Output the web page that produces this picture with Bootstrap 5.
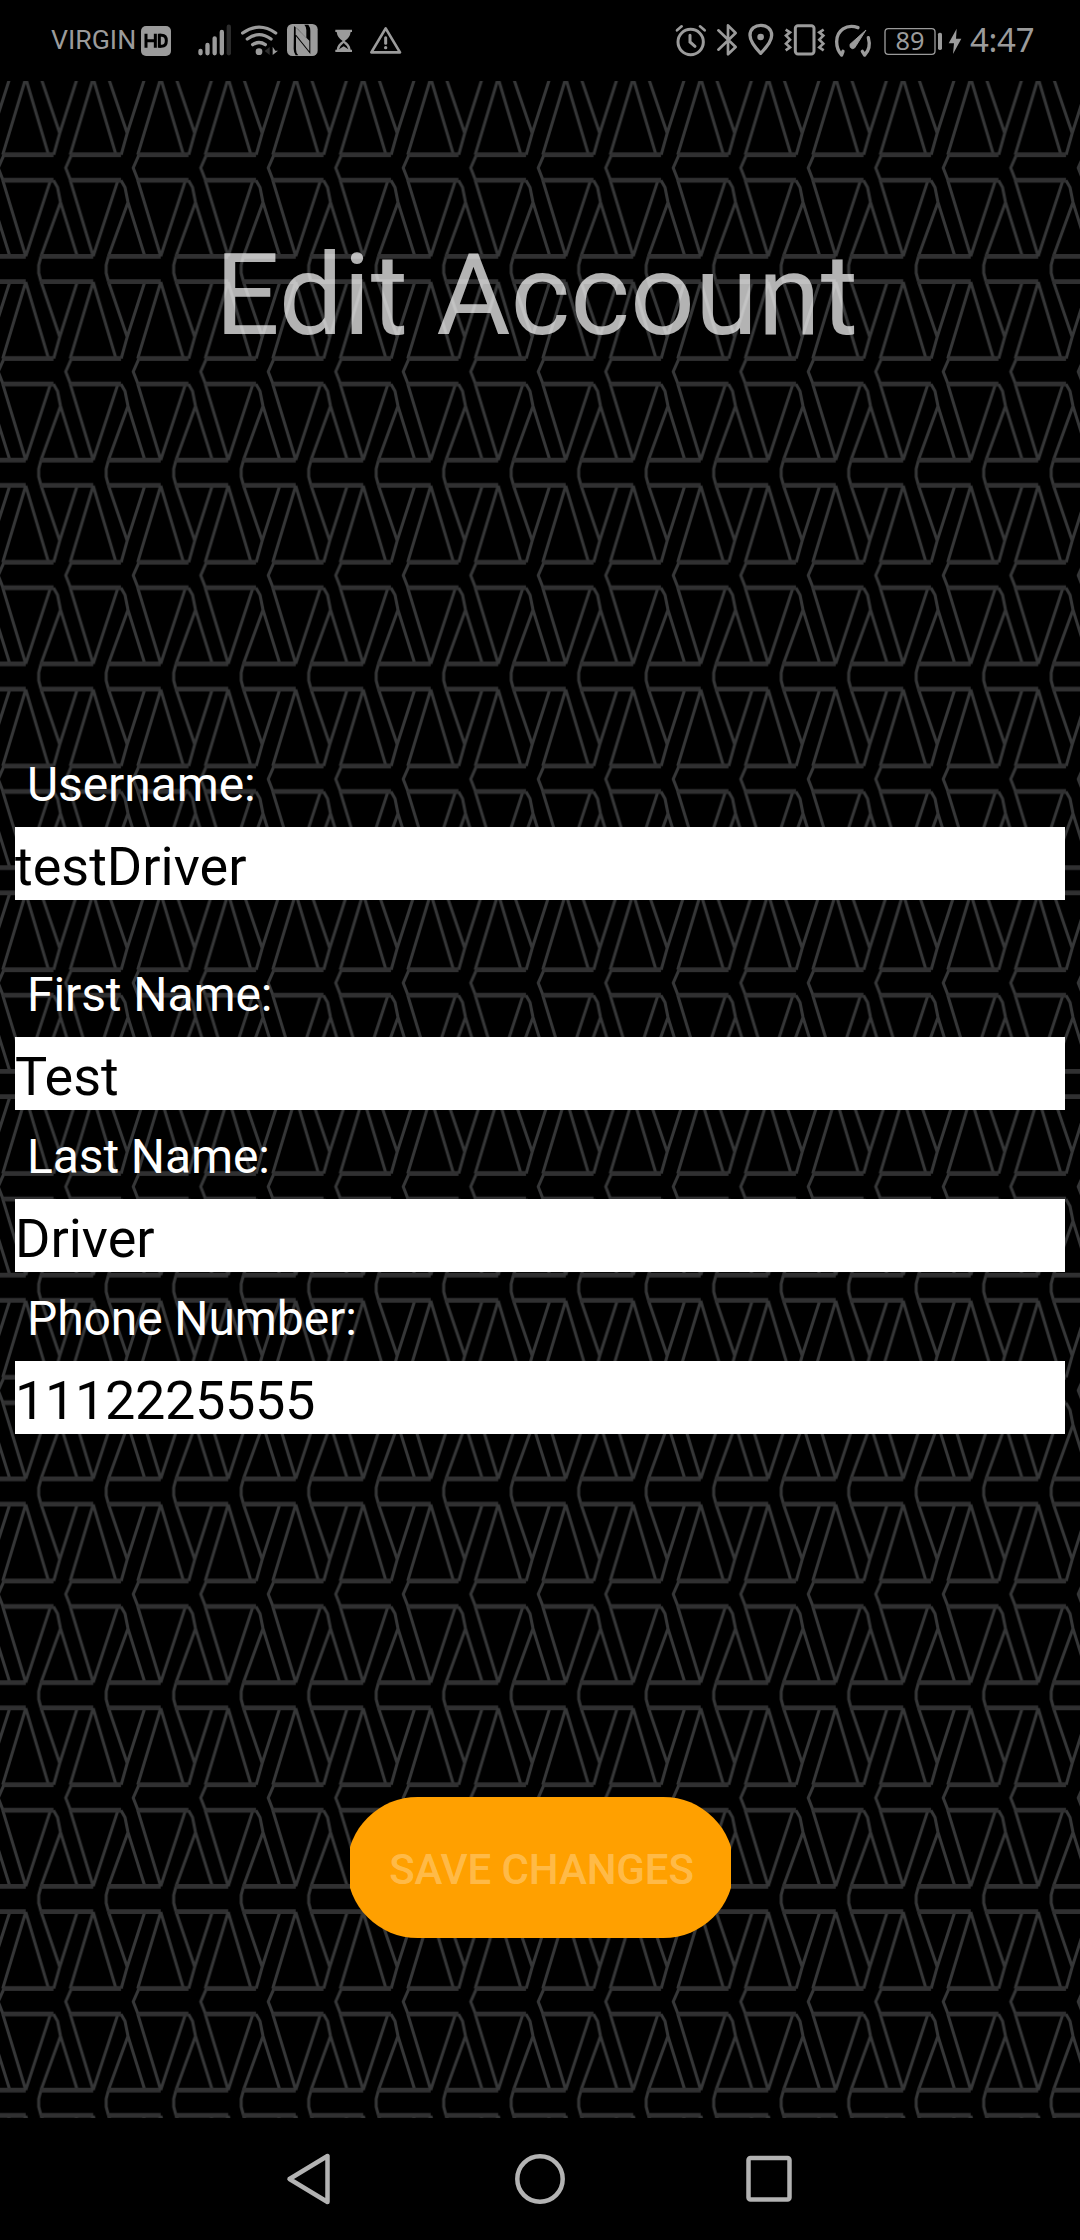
<!DOCTYPE html>
<html lang="en">
<head>
<meta charset="utf-8">
<meta name="viewport" content="width=device-width, initial-scale=1">
<title>Edit Account</title>
<link href="https://cdn.jsdelivr.net/npm/bootstrap@5.3.0/dist/css/bootstrap.min.css" rel="stylesheet">
<style>
  body { background: #000; font-family: Roboto, "Liberation Sans", sans-serif; }
  .phone { width: 1080px; height: 2240px; }
  .status-bar { height: 81px; padding-left: 30px; color: #9b9b9b; }
  .status-bar svg { height: 80px; flex: none; display: block; }
  .carrier { width: 110px; padding-left: 21px; font-size: 26.7px; line-height: 81px; white-space: nowrap; }
  .clock { width: 110px; font: 33px/80px "Noto Sans", sans-serif; white-space: nowrap; letter-spacing: -.3px; }
  .screen { height: 2037px; }
  .backdrop { z-index: 0; }
  .screen-title { font-size: 114px; line-height: 134px; padding: 147px 7px 0 0; height: 657px; color: rgba(255,255,255,.7); font-weight: 400; }
  .account-form { padding: 0 15px; }
  .field-label { height: 89px; padding: 19px 0 0 12px; font-size: 48px; line-height: 56px; color: #fff; letter-spacing: -.1px; }
  .field-input { height: 73px; font-size: 54px; line-height: 73px; padding: 5px 0 0; color: #000; background: #fff; }
  .field-input:focus { background: #fff; box-shadow: none; }
  .field-digits { letter-spacing: -.35px; }
  .field-gap { margin-bottom: 48px; }
  .save-wrap { width: 381px; height: 141px; margin: 363px auto 0 350px; }
  .save-btn { width: 387px; margin-left: -3px; background: #ffa000; color: rgba(255,255,255,.3); font-size: 42px; font-weight: 500; letter-spacing: -.1px; padding: 4px 0 0 2px; }
  .save-btn:hover { background: #ffa000; color: rgba(255,255,255,.3); }
  .nav-keys { height: 122px; padding: 0 284px; }
</style>
<script src="https://cdn.jsdelivr.net/npm/bootstrap@5.3.0/dist/js/bootstrap.bundle.min.js"></script>
</head>
<body>
<div class="phone d-flex flex-column overflow-hidden">
  <header class="status-bar d-flex">
    <div class="carrier">VIRGIN</div>
    <svg width="33.33" viewBox="330 0 100 240"><rect x="333" y="78" width="90" height="90" rx="15" fill="#9b9b9b"/><path d="M348 101V143M376 101V143M348 122H376M388 101V143" stroke="#000" stroke-width="9" fill="none"/><path d="M388 105.500H395Q409 105.500 409 122T395 138.500H388" fill="none" stroke="#000" stroke-width="9"/></svg>
    <svg width="63.33" viewBox="430 0 190 240" stroke="#9b9b9b" stroke-width="13" stroke-linecap="round"><path d="M512.500 153V160M533.500 135V160M555 115V160M576.500 96V160"/><path d="M597.500 80V160" stroke="#2c2c2c"/></svg>
    <svg width="45" viewBox="620 0 135 240" fill="none" stroke="#9b9b9b" stroke-width="10" stroke-linecap="round"><path d="M637 99Q686 64 736 99M651 117Q686 91 722 117M667 134Q686 121 705 134"/><circle cx="686" cy="155" r="10" fill="#9b9b9b" stroke="none"/><path d="M718 141V165L703 153Z" fill="#2c2c2c" stroke="none"/><path d="M727 140V165L743 152H735Z" fill="#9b9b9b" stroke="none"/></svg>
    <svg width="41.67" viewBox="755 0 125 240"><rect x="770" y="72" width="92" height="96" rx="16" fill="#9b9b9b"/><path d="M791 78L803 88L828 114V90Q828 80 822 74H834Q840 82 840 92V162L797 109V148Q797 160 804 166H796Q790 158 790 146Z" fill="#000"/><path d="M796 82L837 122V154L796 103Z" fill="#9b9b9b"/></svg>
    <svg width="40" viewBox="880 0 120 240" fill="#9b9b9b"><path d="M917 89H967V96H963Q961 113 945 123Q961 132 963 149H967V156H917V149H921Q923 132 939 123Q923 113 921 96H917Z"/><path d="M928 148Q930 138 942 129Q954 138 956 148L942 139Z" fill="#000"/></svg>
    <svg width="43.33" viewBox="1000 0 130 240" fill="none" stroke="#9b9b9b" stroke-linejoin="round"><path d="M1068 85L1111 157H1025Z" stroke-width="8"/><path d="M1068 113V130" stroke-width="9" stroke-linecap="round"/><circle cx="1068" cy="143" r="5" fill="#9b9b9b" stroke="none"/></svg>

    <svg class="ms-auto" width="40" viewBox="70 0 120 240" fill="none" stroke="#9b9b9b" stroke-linecap="round"><circle cx="123" cy="126" r="38" stroke-width="9"/><path d="M121 106V126L136 139" stroke-width="9"/><path d="M82 91L96 79M151 79L165 91" stroke-width="8"/></svg>
    <svg width="30" viewBox="190 0 90 240" fill="none" stroke="#9b9b9b" stroke-width="8" stroke-linecap="round" stroke-linejoin="round"><path d="M206 91L258 141L235 163V76L258 99L206 149"/></svg>
    <svg width="36.67" viewBox="280 0 110 240"><path d="M333 160Q301 127 301 106C301 66 366 66 366 106Q366 127 333 160Z" fill="none" stroke="#9b9b9b" stroke-width="10" stroke-linejoin="round"/><circle cx="333" cy="111" r="10" fill="#9b9b9b"/></svg>
    <svg width="50" viewBox="390 0 150 240" fill="none" stroke="#9b9b9b"><rect x="436" y="77" width="56" height="85" rx="8" stroke-width="9"/><path d="M407 89L420 97L408 107L420 119L408 131L420 142L407 151M521 89L508 97L520 107L508 119L520 131L508 142L521 151" stroke-width="8"/></svg>
    <svg width="46.67" viewBox="540 0 140 240" fill="none" stroke="#9b9b9b" stroke-width="10" stroke-linecap="round" stroke-linejoin="round"><path d="M624 83C590 70 560 92 560 125Q560 149 575 165L579 154M655 113Q664 145 644 165L637 154"/><path d="M647 91L600 133Q598 144 607 146Q615 146 618 138Z" fill="#9b9b9b" stroke-width="3"/></svg>
    <svg width="68.33" viewBox="680 0 205 240"><rect x="704" y="86" width="150" height="77" rx="10" fill="none" stroke="#9b9b9b" stroke-width="4"/><rect x="863" y="98" width="12" height="52" rx="5" fill="#9b9b9b"/><text x="779" y="151" text-anchor="middle" font-family="Noto Sans, sans-serif" font-size="76" fill="#9b9b9b">89</text></svg>
    <svg width="25" viewBox="885 0 75 240" fill="#9b9b9b"><path d="M920 86L896 130H912L909 162L934 116H918Z"/></svg>
    <div class="clock">4:47</div>
  </header>

  <main class="screen position-relative overflow-hidden">
    <svg class="backdrop position-absolute top-0 start-0" width="1080" height="2037" aria-hidden="true">
      <defs>
        <g id="trellis" fill="none" stroke="#363738" stroke-width="3" stroke-linejoin="round">
          <path d="M25.700 12L48.500 88.500M25.700 12L2.700 88.500M41 11.700L59.700 67M77.300 11.700L59.700 67L53.700 88.500"/>
          <path d="M2.700 114L25.700 190M50.500 114L25.700 190M53.500 114L57.500 121L60.500 136L77.300 190M60.500 136L41 190"/>
          <path d="M71.500 88.500L65.700 101.700L70.500 114M41 190.200L38.700 199V208M38.700 -5V3L41 11.700"/>
          <path d="M3.500 88.500H53.500M3.500 114H53.500M40.500 11.700H93.200M40.500 190.200H93.200" stroke="#303031" stroke-width="4.800"/>
        </g>
        <pattern id="mesh" x="0" y="-14.750" width="67.500" height="203.750" patternUnits="userSpaceOnUse">
          <use href="#trellis" x="-67.500"/><use href="#trellis"/><use href="#trellis" x="67.500"/>
        </pattern>
      </defs>
      <rect width="1080" height="2037" fill="url(#mesh)"/>
    </svg>
    <div class="position-relative">
      <h1 class="screen-title text-center m-0">Edit Account</h1>
      <form class="account-form">
        <label class="field-label d-block" for="user">Username:</label>
        <input id="user" class="field-input field-gap form-control border-0 rounded-0" value="testDriver">
        <label class="field-label d-block" for="first">First Name:</label>
        <input id="first" class="field-input form-control border-0 rounded-0" value="Test">
        <label class="field-label d-block" for="last">Last Name:</label>
        <input id="last" class="field-input form-control border-0 rounded-0" value="Driver">
        <label class="field-label d-block" for="phone">Phone Number:</label>
        <input id="phone" class="field-input field-digits form-control border-0 rounded-0" value="1112225555">
      </form>
      <div class="save-wrap overflow-hidden d-flex">
        <button type="button" class="save-btn btn rounded-pill border-0 h-100 flex-shrink-0">SAVE CHANGES</button>
      </div>
    </div>
  </main>

  <nav class="nav-keys d-flex justify-content-between align-items-center">
    <svg width="50" height="56" viewBox="0 0 50 56" fill="none" stroke="#b3b3b3" stroke-width="4.500" stroke-linejoin="round"><path d="M43.500 5V51L5.500 28Z"/></svg>
    <svg width="56" height="56" viewBox="0 0 56 56" fill="none" stroke="#b3b3b3" stroke-width="4.500"><circle cx="28" cy="28" r="22.700"/></svg>
    <svg width="50" height="56" viewBox="0 0 50 56" fill="none" stroke="#b3b3b3" stroke-width="4.500"><rect x="2.500" y="7" width="41" height="41.500" rx="2"/></svg>
  </nav>
</div>
</body>
</html>
